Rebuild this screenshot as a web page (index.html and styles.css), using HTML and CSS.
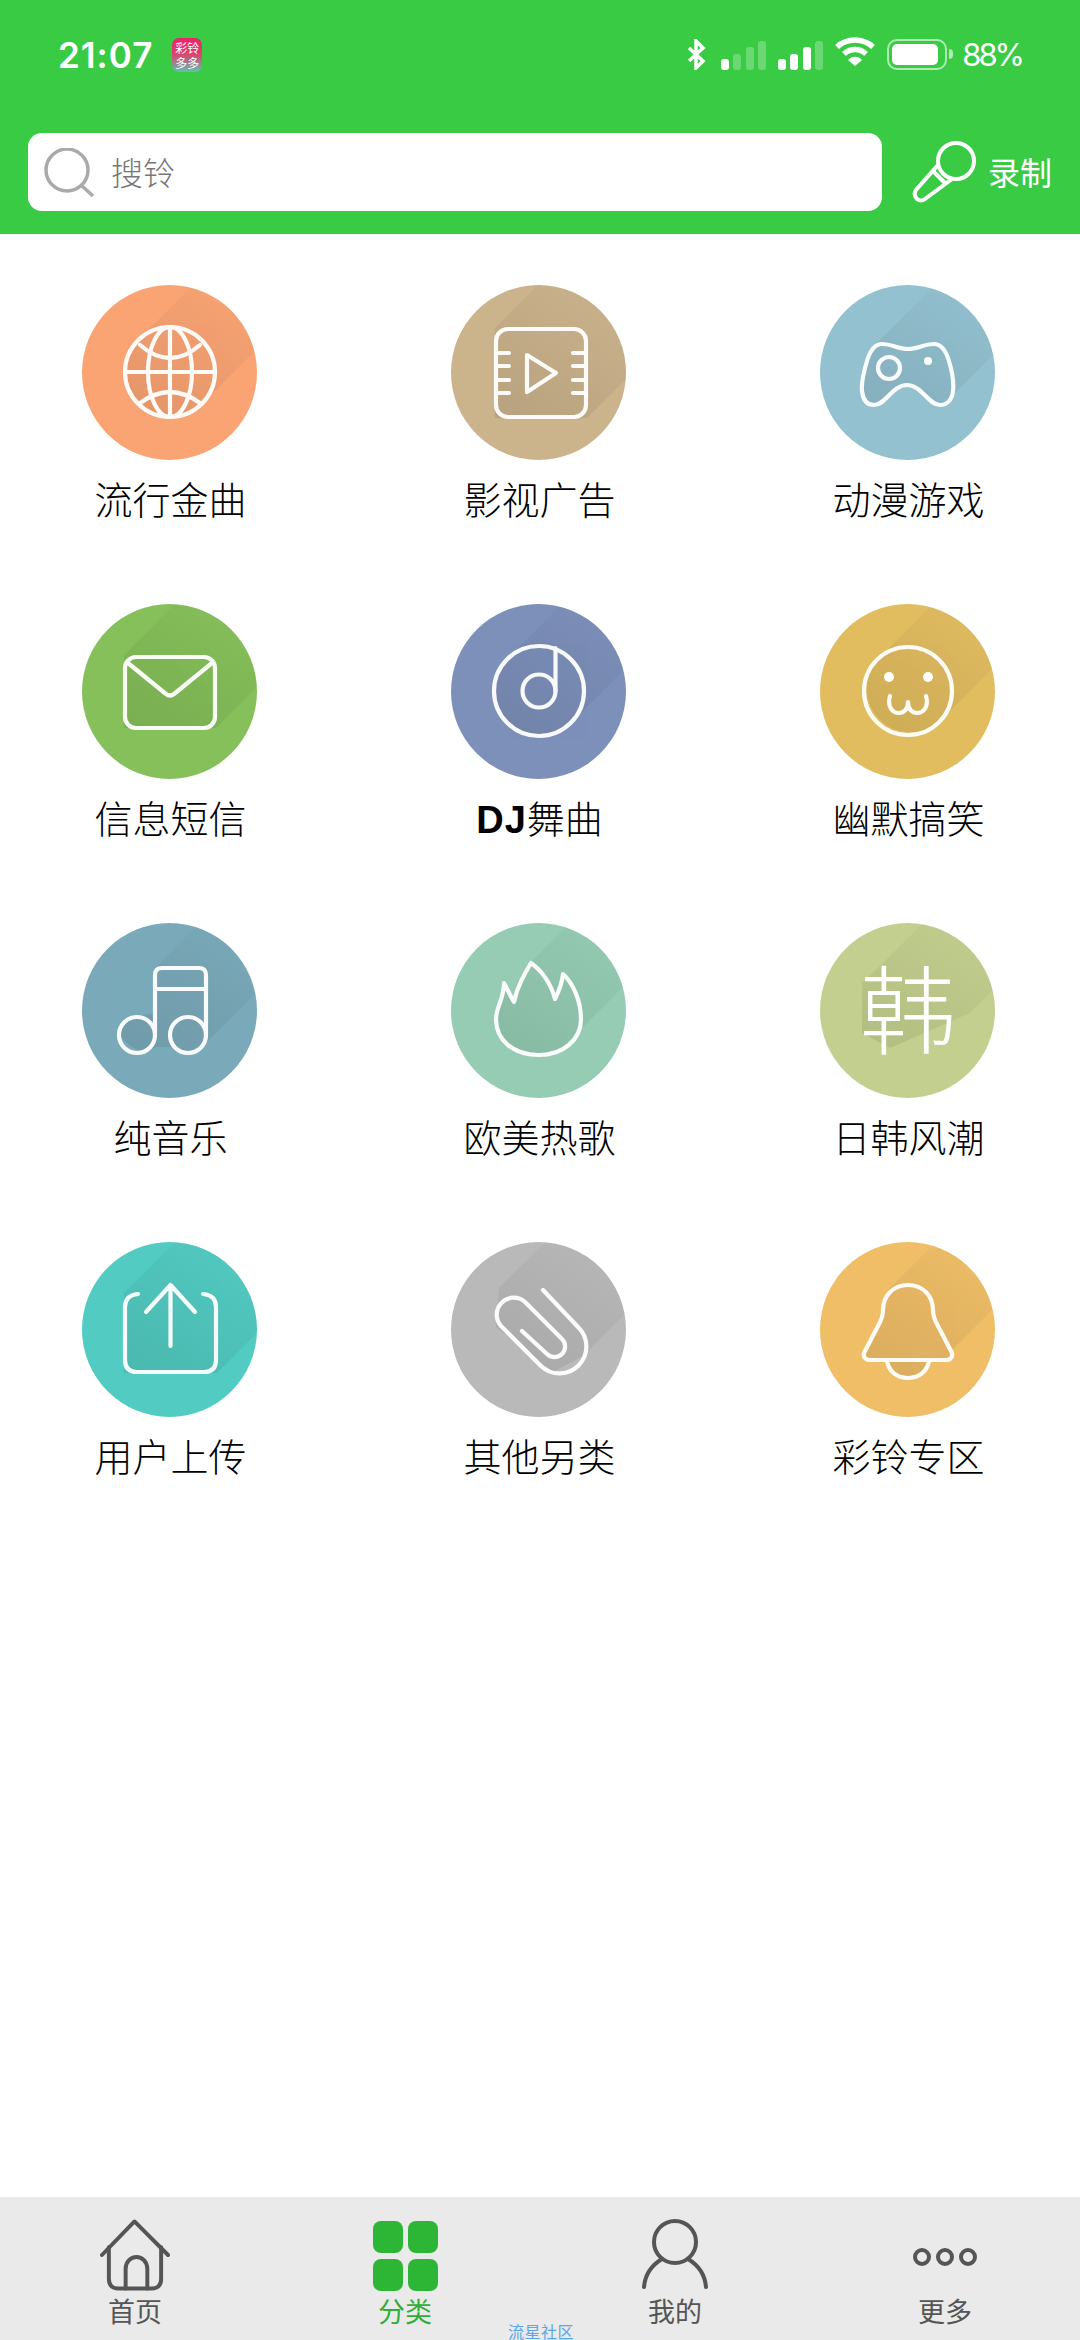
FILE: index.html
```html
<!DOCTYPE html>
<html lang="zh-CN">
<head>
    <meta charset="UTF-8">
    <meta name="viewport" content="width=device-width, initial-scale=1.0">
    <title>彩铃分类</title>
    <link rel="stylesheet" href="styles.css">
</head>
<body>
    <svg class="defs" width="0" height="0">
        <defs>
            <linearGradient id="shade" gradientUnits="userSpaceOnUse" x1="60" y1="135" x2="135" y2="15">
                <stop offset="0" stop-color="#000" stop-opacity="0.09"/>
                <stop offset="1" stop-color="#000" stop-opacity="0.02"/>
            </linearGradient>
        </defs>
    </svg>

    <header class="top">
        <div class="status">
            <span class="time">21:07</span>
            <span class="app-icon">彩铃<br>多多</span>
            <div class="status-right">
                <svg class="bt" viewBox="0 0 20 31"><path d="M3 9 L17 22 L10 29 V2 L17 9 L3 22"/></svg>
                <svg class="signal" viewBox="0 0 45 29">
                    <rect x="0" y="18" width="8" height="11" rx="3"/>
                    <rect class="off" x="12" y="13" width="8" height="16" rx="3"/>
                    <rect class="off" x="25" y="6" width="8" height="23" rx="3"/>
                    <rect class="off" x="37" y="0" width="8" height="29" rx="3"/>
                </svg>
                <svg class="signal" viewBox="0 0 45 29">
                    <rect x="0" y="18" width="8" height="11" rx="3"/>
                    <rect x="12" y="13" width="8" height="16" rx="3"/>
                    <rect x="25" y="6" width="8" height="23" rx="3"/>
                    <rect class="off" x="37" y="0" width="8" height="29" rx="3"/>
                </svg>
                <svg class="wifi" viewBox="0 0 40 29">
                    <path class="arc" d="M2 10 A27 27 0 0 1 38 10"/>
                    <path class="arc" d="M9 17 A16 16 0 0 1 31 17"/>
                    <path d="M13 23 A9 9 0 0 1 27 23 L20 29 Z"/>
                </svg>
                <div class="battery"><div class="battery-fill"></div></div>
                <div class="battery-nub"></div>
                <span class="percent">88%</span>
            </div>
        </div>
        <div class="search-row">
            <div class="search">
                <svg class="search-icon" viewBox="0 0 50 50"><circle cx="23" cy="22" r="21"/><path d="M38 38 L49 48"/></svg>
                <span class="search-text">搜铃</span>
            </div>
            <div class="record">
                <svg class="mic" viewBox="0 0 64 62">
                    <circle cx="44" cy="20" r="18"/>
                    <path d="M26 24 L4 49 Q1 54 5 58 Q9 61 13 58 L40 38"/>
                    <path d="M21 30 L34 43"/>
                </svg>
                <span>录制</span>
            </div>
        </div>
    </header>

    <main class="grid">
        <div class="cat">
            <div class="disc c-orange">
                <svg viewBox="0 0 175 175">
                    <path class="band" d="M56 55 L156 -45 L220 19 L120 119 A45 45 0 0 1 56 55 Z"/>
                    <g class="line">
                        <circle cx="88" cy="87" r="45"/>
                        <ellipse cx="88" cy="87" rx="22" ry="45"/>
                        <path d="M88 42 V132 M43 87 H133 M58 60 Q88 86 118 60 M58 118 Q88 96 118 118"/>
                    </g>
                </svg>
            </div>
            <p>流行金曲</p>
        </div>
        <div class="cat">
            <div class="disc c-tan">
                <svg viewBox="0 0 175 175">
                    <path class="band" d="M44 43 L144 -57 L236 33 L136 133 L44 133 Z"/>
                    <g class="line">
                        <rect x="45" y="44" width="90" height="88" rx="12"/>
                        <path d="M46 68 H58 M46 81 H58 M46 95 H58 M46 108 H58 M122 68 H134 M122 81 H134 M122 95 H134 M122 108 H134"/>
                        <path d="M76 70 L105 88 L76 107 Z"/>
                    </g>
                </svg>
            </div>
            <p>影视广告</p>
        </div>
        <div class="cat">
            <div class="disc c-blue">
                <svg viewBox="0 0 175 175">
                    <path class="band" d="M55 60 L155 -40 L232 11 L132 111 C130 116 126 120 120 120 C108 120 102 100 87 100 C72 100 66 120 54 120 C47 120 43 115 42 106 C41 96 44 86 47 76 C49 70 51 64 55 60 Z"/>
                    <g class="line">
                        <path d="M62 59 C72 59 78 64 88 64 C98 64 104 59 114 59 C122 59 126 66 129 76 C132 86 134 98 133 106 C132 115 127 120 120 120 C108 120 102 100 87 100 C72 100 66 120 54 120 C47 120 43 115 42 106 C41 96 44 86 47 76 C50 66 54 59 62 59 Z"/>
                        <circle cx="69" cy="83" r="11"/>
                    </g>
                    <circle class="dot" cx="108" cy="76" r="4"/>
                </svg>
            </div>
            <p>动漫游戏</p>
        </div>

        <div class="cat">
            <div class="disc c-green">
                <svg viewBox="0 0 175 175">
                    <path class="band" d="M42 51 L142 -49 L234 24 L134 124 L42 124 Z"/>
                    <g class="line">
                        <rect x="43" y="53" width="90" height="71" rx="11"/>
                        <path d="M46 59 L84 90 Q88 93 92 90 L130 59"/>
                    </g>
                </svg>
            </div>
            <p>信息短信</p>
        </div>
        <div class="cat">
            <div class="disc c-indigo">
                <svg viewBox="0 0 175 175">
                    <path class="band" d="M56 55 L156 -45 L220 19 L120 119 A45 45 0 0 1 56 55 Z"/>
                    <g class="line">
                        <circle cx="88" cy="87" r="45"/>
                        <circle cx="88" cy="87" r="16.5"/>
                        <path d="M104.500 87 V44"/>
                    </g>
                </svg>
            </div>
            <p><b>DJ</b>舞曲</p>
        </div>
        <div class="cat">
            <div class="disc c-gold">
                <svg viewBox="0 0 175 175">
                    <path class="band" d="M57 56 L157 -44 L219 18 L119 118 A44 44 0 0 1 57 56 Z"/>
                    <g class="line">
                        <circle cx="88" cy="87" r="44"/>
                        <path d="M70 92 C67 102 72 109 79 109 C84 109 88 105 88 98 C88 105 92 109 97 109 C104 109 109 102 106 92"/>
                    </g>
                    <circle class="dot" cx="69" cy="73" r="5"/>
                    <circle class="dot" cx="108" cy="73" r="5"/>
                </svg>
            </div>
            <p>幽默搞笑</p>
        </div>

        <div class="cat">
            <div class="disc c-slate">
                <svg viewBox="0 0 175 175">
                    <path class="band" d="M73 45 L173 -55 L219 25 L119 125 Q106 135 94 124 L74 124 Q55 135 38 112 Q40 94 73 90 Z"/>
                    <g class="line">
                        <circle cx="55" cy="112" r="18"/>
                        <circle cx="106" cy="112" r="18"/>
                        <path d="M73 110 V52 Q73 45 80 45 H117 Q124 45 124 52 V112 M73 66 H124"/>
                    </g>
                </svg>
            </div>
            <p>纯音乐</p>
        </div>
        <div class="cat">
            <div class="disc c-mint">
                <svg viewBox="0 0 175 175">
                    <path class="band" d="M80 39 L180 -61 L218 18 L118 118 C110 127 100 132 88 132 C62 132 44 117 44 95 C44 83 53 75 53 59 C55 66 58 72 62 78 C66 64 74 52 80 39 Z"/>
                    <g class="line">
                        <path d="M88 132 C62 132 45 117 45 96 C45 84 53 76 53 60 C56 66 59 72 63 79 C66 64 73 52 80 40 C90 47 100 60 104 76 C108 68 111 60 112 51 C122 60 130 78 130 96 C130 117 112 132 88 132 Z"/>
                    </g>
                </svg>
            </div>
            <p>欧美热歌</p>
        </div>
        <div class="cat">
            <div class="disc c-olive">
                <svg viewBox="0 0 175 175">
                    <path class="band" d="M60 43 L160 -57 L220 20 L150 90 L70 125 L42 110 L42 60 Z"/>
                    <text class="han" x="88" y="123">韩</text>
                </svg>
            </div>
            <p>日韩风潮</p>
        </div>

        <div class="cat">
            <div class="disc c-teal">
                <svg viewBox="0 0 175 175">
                    <path class="band" d="M42 51 L142 -49 L235 31 L135 131 L42 131 Z"/>
                    <g class="line">
                        <path d="M56 52 Q43 53 43 65 V118 Q43 130 55 130 H122 Q134 130 134 118 V65 Q134 53 121 52"/>
                        <path d="M88.500 43 V104 M64 70 L88.500 43 L113 70"/>
                    </g>
                </svg>
            </div>
            <p>用户上传</p>
        </div>
        <div class="cat">
            <div class="disc c-grey">
                <svg viewBox="0 0 175 175">
                    <path class="band" d="M48 46 L148 -54 L232 14 L132 114 L102 130 L45 85 Z"/>
                    <g class="line">
                        <path d="M92 48 L127 85 A26 26 0 0 1 90 124 L50 84 A17 17 0 0 1 74 60 L111 97 A10.600 10.600 0 0 1 96 112 L71 89"/>
                    </g>
                </svg>
            </div>
            <p>其他另类</p>
        </div>
        <div class="cat">
            <div class="disc c-amber">
                <svg viewBox="0 0 175 175">
                    <path class="band" d="M68 48 L168 -52 L231 9 L131 109 C134 114 131 118 126 118 H109 C108 129 99 136 88 136 C77 136 68 129 67 118 H50 C45 118 42 114 45 109 L58 84 C61 79 63 75 63 68 C63 60 65 54 68 48 Z"/>
                    <g class="line">
                        <path d="M88 43 C73 43 63 54 63 68 C63 75 61 79 58 84 L45 109 C42 114 45 118 50 118 H126 C131 118 134 114 131 109 L118 84 C115 79 113 75 113 68 C113 54 103 43 88 43 Z"/>
                        <path d="M67 118 C68 129 77 136 88 136 C99 136 108 129 109 118"/>
                    </g>
                </svg>
            </div>
            <p>彩铃专区</p>
        </div>
    </main>

    <nav class="tabs">
        <div class="tab">
            <svg class="tab-icon" viewBox="0 0 71 72">
                <path d="M2 36 L35 2 L69 36"/>
                <path d="M9 28 V60 Q9 70 19 70 H52 Q62 70 62 60 V28"/>
                <path d="M26 70 V50 A11 12 0 0 1 48 50 V70"/>
            </svg>
            <span>首页</span>
        </div>
        <div class="tab active">
            <div class="tab-grid"><i></i><i></i><i></i><i></i></div>
            <span>分类</span>
        </div>
        <div class="tab">
            <svg class="tab-icon" viewBox="0 0 70 72">
                <circle cx="35" cy="23" r="21"/>
                <path d="M22 40 C12 46 5 56 4 68 M48 40 C58 46 65 56 66 68"/>
            </svg>
            <span>我的</span>
        </div>
        <div class="tab">
            <svg class="tab-icon" viewBox="0 0 70 72">
                <circle cx="12" cy="38" r="7"/>
                <circle cx="35" cy="38" r="7"/>
                <circle cx="58" cy="38" r="7"/>
            </svg>
            <span>更多</span>
        </div>
        <span class="community">流星社区</span>
    </nav>
</body>
</html>
```

FILE: styles.css
```css
* {
    box-sizing: border-box;
}

html, body {
    margin: 0;
    padding: 0;
    height: 2340px;
    overflow: hidden;
}

body {
    display: flex;
    flex-direction: column;
    width: 1080px;
    background: #fff;
    font-family: "Noto Sans CJK SC", "Noto Sans", sans-serif;
    color: #000;
}

.defs {
    position: absolute;
}

/* header */
.top {
    height: 234px;
    padding-top: 37px;
    background: #3acb45;
    color: #fff;
}

.status {
    display: flex;
    align-items: center;
    height: 36px;
    padding: 0 58px;
}

.time {
    font-family: Inter, sans-serif;
    font-size: 35px;
    font-weight: 600;
    letter-spacing: 1px;
}

.app-icon {
    width: 30px;
    height: 34px;
    margin-left: 19px;
    padding-top: 2px;
    border-radius: 7px;
    background: linear-gradient(#e9236a, #d8476f 50%, #5cc3b0);
    font-size: 12px;
    line-height: 15px;
    text-align: center;
}

.status-right {
    display: flex;
    align-items: center;
    margin-top: -2px;
    margin-left: auto;
}

.bt {
    width: 20px;
    height: 31px;
    fill: none;
    stroke: #fff;
    stroke-width: 3.500;
}

.signal {
    width: 45px;
    height: 29px;
    margin-left: 15px;
    margin-top: 3px;
    fill: #fff;
}

.signal + .signal {
    margin-left: 12px;
}

.signal .off {
    opacity: 0.25;
}

.wifi {
    width: 40px;
    height: 29px;
    margin-left: 12px;
    margin-top: -6px;
    fill: #fff;
}

.wifi .arc {
    fill: none;
    stroke: #fff;
    stroke-width: 5.500;
}

.battery {
    width: 60px;
    height: 31px;
    margin-left: 12px;
    padding: 3px;
    border: 2px solid rgba(255, 255, 255, 0.6);
    border-radius: 10px;
}

.battery-fill {
    width: 46px;
    height: 100%;
    border-radius: 5px;
    background: #fff;
}

.battery-nub {
    width: 4px;
    height: 10px;
    margin-left: 2px;
    border-radius: 0 4px 4px 0;
    background: rgba(255, 255, 255, 0.6);
}

.percent {
    margin-left: 9px;
    font-family: Inter, sans-serif;
    font-size: 31px;
    letter-spacing: -3px;
}

.search-row {
    display: flex;
    align-items: center;
    margin-top: 60px;
    padding-left: 28px;
}

.search {
    display: flex;
    align-items: center;
    width: 854px;
    height: 78px;
    padding-left: 16px;
    border-radius: 14px;
    background: #fff;
}

.search-icon {
    width: 50px;
    height: 50px;
    margin-top: 2px;
    fill: none;
    stroke: #aaa;
    stroke-width: 3.500;
}

.search-text {
    margin: 0 0 2px 17px;
    font-size: 32px;
    font-weight: 300;
    color: #777;
}

.record {
    display: flex;
    align-items: center;
    margin-left: 30px;
    font-size: 32px;
}

.record span {
    margin-bottom: 2px;
}

.mic {
    width: 64px;
    height: 62px;
    margin-right: 12px;
    fill: none;
    stroke: #fff;
    stroke-width: 4;
}

/* categories */
.grid {
    flex: 1;
    display: grid;
    grid-template-columns: repeat(3, 175px);
    grid-auto-rows: 241px;
    column-gap: 194px;
    row-gap: 78px;
    align-content: start;
    padding: 51px 0 0 82px;
}

.cat {
    display: flex;
    flex-direction: column;
    align-items: center;
}

.cat p {
    margin: 13px 0 0;
    padding-left: 2px;
    font-size: 38px;
    font-weight: 300;
    line-height: 50px;
    white-space: nowrap;
}

.cat b {
    font-family: "Liberation Sans", sans-serif;
    font-weight: 700;
    line-height: 0;
    letter-spacing: 1px;
}

.disc {
    width: 175px;
    height: 175px;
    border-radius: 50%;
    overflow: hidden;
}

.disc svg {
    display: block;
    width: 175px;
    height: 175px;
}

.band {
    fill: url(#shade);
}

.line {
    fill: none;
    stroke: #fff;
    stroke-width: 4.200;
    stroke-linecap: round;
    stroke-linejoin: round;
    opacity: 0.95;
}

.dot {
    fill: #fff;
}

.han {
    font-size: 96px;
    font-weight: 300;
    fill: #fff;
    text-anchor: middle;
}

.c-orange { background: #faa474; }
.c-tan { background: #cbb38c; }
.c-blue { background: #93c1d0; }
.c-green { background: #86c05a; }
.c-indigo { background: #7d90ba; }
.c-gold { background: #e1bd60; }
.c-slate { background: #7aaaba; }
.c-mint { background: #95ccb3; }
.c-olive { background: #c3cf8e; }
.c-teal { background: #52cbc2; }
.c-grey { background: #b9b9b9; }
.c-amber { background: #efbe67; }

/* tab bar */
.tabs {
    position: relative;
    display: grid;
    grid-template-columns: repeat(4, 270px);
    height: 143px;
    padding-top: 22px;
    background: #eaeaea;
    color: #555;
}

.tab {
    display: flex;
    flex-direction: column;
    align-items: center;
    font-size: 27px;
    line-height: 34px;
}

.tab-icon {
    width: 70px;
    height: 72px;
    fill: none;
    stroke: #555;
    stroke-width: 4;
    stroke-linecap: round;
    stroke-linejoin: round;
}

.tab span {
    margin-top: 3px;
}

.tab.active {
    color: #2fae3a;
}

.tab-grid {
    display: grid;
    grid-template-columns: 30px 30px;
    grid-auto-rows: 32px;
    gap: 6px 5px;
    height: 72px;
    padding-top: 2px;
}

.tab-grid i {
    border-radius: 8px;
    background: #2db535;
}

.community {
    position: absolute;
    left: 508px;
    top: 126px;
    font-size: 16px;
    line-height: 16px;
    letter-spacing: 0.5px;
    color: #5aa6e8;
}
```
